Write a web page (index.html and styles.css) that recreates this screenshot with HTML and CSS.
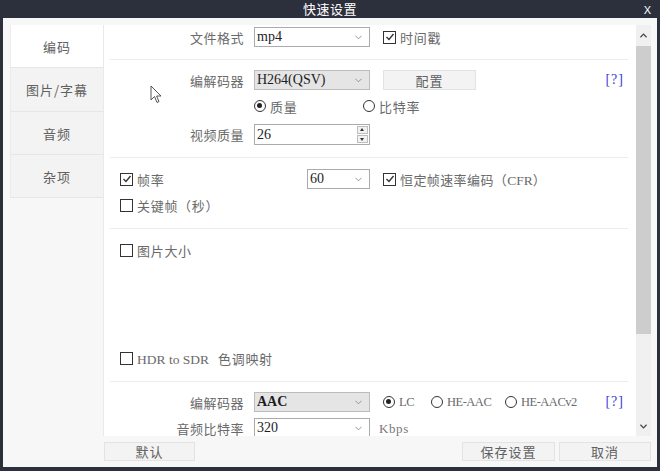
FILE: index.html
```html
<!DOCTYPE html>
<html lang="zh">
<head>
<meta charset="utf-8">
<title>快速设置</title>
<link rel="stylesheet" href="styles.css">
</head>
<body>
<div class="window">
  <div class="titlebar">
    <span class="title">快速设置</span>
    <span class="close">X</span>
  </div>
  <div class="body">
    <div class="main">
      <div class="tabs">
        <div class="tab active">编码</div>
        <div class="tab">图片/字幕</div>
        <div class="tab">音频</div>
        <div class="tab">杂项</div>
      </div>
      <div class="pane">
        <div class="content">
          <div class="section s1">
            <div class="row">
              <span class="lbl">文件格式</span>
              <div class="select field"><span class="val">mp4</span><svg class="chev" viewBox="0 0 8 5"><polyline points="0.5,0.5 4,4 7.5,0.5"/></svg></div>
              <label class="check after"><span class="box on"><svg viewBox="0 0 10 10"><polyline points="1.5,5 4,7.5 8.5,2"/></svg></span><span class="txt">时间戳</span></label>
            </div>
          </div>
          <div class="section s2">
            <div class="row">
              <span class="lbl">编解码器</span>
              <div class="select field dis"><span class="val">H264(QSV)</span><svg class="chev" viewBox="0 0 8 5"><polyline points="0.5,0.5 4,4 7.5,0.5"/></svg></div>
              <div class="btn cfg">配置</div>
              <span class="help">[?]</span>
            </div>
            <div class="row r3">
              <span class="lbl"></span>
              <label class="radio w109"><span class="dot on"></span><span class="txt">质量</span></label>
              <label class="radio"><span class="dot"></span><span class="txt">比特率</span></label>
            </div>
            <div class="row r4">
              <span class="lbl">视频质量</span>
              <div class="select field spin"><span class="val">26</span>
                <span class="arrows"><span class="ar up"></span><span class="ar dn"></span></span>
              </div>
            </div>
          </div>
          <div class="section s3">
            <div class="row">
              <label class="check w187"><span class="box on"><svg viewBox="0 0 10 10"><polyline points="1.5,5 4,7.5 8.5,2"/></svg></span><span class="txt">帧率</span></label>
              <div class="select fps"><span class="val">60</span><svg class="chev" viewBox="0 0 8 5"><polyline points="0.5,0.5 4,4 7.5,0.5"/></svg></div>
              <label class="check after"><span class="box on"><svg viewBox="0 0 10 10"><polyline points="1.5,5 4,7.5 8.5,2"/></svg></span><span class="txt tight">恒定帧速率编码（<span class="lat">CFR</span>）</span></label>
            </div>
            <div class="row r6">
              <label class="check"><span class="box"></span><span class="txt">关键帧（秒）</span></label>
            </div>
          </div>
          <div class="section s4">
            <div class="row r7">
              <label class="check"><span class="box"></span><span class="txt">图片大小</span></label>
            </div>
            <div class="row r8">
              <label class="check"><span class="box"></span><span class="txt"><span class="lat hdr">HDR to SDR</span>色调映射</span></label>
            </div>
          </div>
          <div class="section s5">
            <div class="row">
              <span class="lbl">编解码器</span>
              <div class="select field dis"><span class="val b">AAC</span><svg class="chev" viewBox="0 0 8 5"><polyline points="0.5,0.5 4,4 7.5,0.5"/></svg></div>
              <label class="radio after w48"><span class="dot on"></span><span class="txt rl">LC</span></label>
              <label class="radio w74"><span class="dot"></span><span class="txt rl">HE-AAC</span></label>
              <label class="radio"><span class="dot"></span><span class="txt rl">HE-AACv2</span></label>
              <span class="help">[?]</span>
            </div>
            <div class="row r10">
              <span class="lbl">音频比特率</span>
              <div class="select field"><span class="val">320</span><svg class="chev" viewBox="0 0 8 5"><polyline points="0.5,0.5 4,4 7.5,0.5"/></svg></div>
              <span class="unit">Kbps</span>
            </div>
          </div>
        </div>
        <div class="scrollbar">
          <div class="sbtn"><svg viewBox="0 0 8 5"><polyline points="0.5,4.5 4,1 7.5,4.5"/></svg></div>
          <div class="thumb"></div>
          <div class="track"></div>
          <div class="sbtn"><svg viewBox="0 0 8 5"><polyline points="0.5,0.5 4,4 7.5,0.5"/></svg></div>
        </div>
        <svg class="cursor" viewBox="0 0 12 19"><path d="M1,1 L1,15 L4.5,11.5 L7,17.5 L9,16.6 L6.6,11 L11,11 Z"/></svg>
      </div>
    </div>
    <div class="footer">
      <div class="btn fbtn def">默认</div>
      <div class="btn fbtn save">保存设置</div>
      <div class="btn fbtn cancel">取消</div>
    </div>
  </div>
</div>
</body>
</html>
```
FILE: styles.css
```css
* { box-sizing: border-box; }
html, body { margin: 0; padding: 0; }
body {
  width: 660px;
  height: 471px;
  overflow: hidden;
  font-family: "Noto Sans CJK SC", "Liberation Sans", sans-serif;
  font-size: 13px;
  color: #6a6a6a;
}
.window {
  width: 660px;
  height: 471px;
  display: flex;
  flex-direction: column;
  background: #2c2f3c;
  padding: 0 3px 4px 3px;
}
.titlebar {
  height: 18px;
  display: flex;
  align-items: center;
  justify-content: center;
  position: relative;
  color: #ffffff;
}
.title { font-size: 13px; letter-spacing: 0.5px; line-height: 18px; }
.close {
  position: absolute;
  right: 6px;
  top: 0;
  font-family: "Liberation Sans", sans-serif;
  font-size: 11px;
  line-height: 20px;
}
.body {
  flex: 1;
  background: #f7f7f7;
  padding: 7px 6px 6px 7px;
  display: flex;
  flex-direction: column;
}
.main {
  height: 411px;
  display: flex;
}
.tabs {
  width: 93px;
  display: flex;
  flex-direction: column;
}
.tab {
  height: 43px;
  display: flex;
  align-items: center;
  justify-content: center;
  background: #f3f3f3;
  border-bottom: 1px solid #e6e6e6;
  border-left: 1px solid #ececec;
  color: #606060;
  letter-spacing: 1px;
}
.tab:nth-child(2) { height: 44px; }
.tab.active { background: #ffffff; }
.pane {
  flex: 1;
  display: flex;
  background: #ffffff;
  border-left: 1px solid #e9e9e9;
  position: relative;
  overflow: hidden;
}
.content {
  flex: 1;
  overflow: hidden;
}
.section {
  margin: 0 8px 0 6px;
  padding-left: 10px;
  padding-right: 4px;
  border-bottom: 1px solid #ececec;
}
.s1 { padding-top: 2px; padding-bottom: 12px; }
.s2 { padding-top: 10px; padding-bottom: 12px; }
.s3 { padding-top: 11px; padding-bottom: 14px; }
.s4 { padding-top: 12px; padding-bottom: 14px; }
.s5 { padding-top: 10px; border-bottom: none; }
.row {
  display: flex;
  align-items: center;
  height: 20px;
}
.r3 { margin-top: 8px; height: 16px; }
.r4 { margin-top: 10px; height: 21px; }
.r4 .select { height: 21px; }
.r6 { margin-top: 7px; height: 18px; }
.r7 { height: 18px; }
.r8 { margin-top: 90px; height: 18px; }
.r10 { margin-top: 6px; }
.lbl {
  width: 124px;
  margin-right: 10px;
  text-align: right;
  letter-spacing: 0.5px;
  color: #6a6a6a;
  line-height: 15px;
  flex: none;
}
.select {
  height: 20px;
  border: 1px solid #ababab;
  background: #ffffff;
  display: flex;
  align-items: center;
  padding-left: 2px;
  position: relative;
  flex: none;
}
.field { width: 116px; }
.fps { width: 63px; }
.select.dis { background: #e5e5e5; border-color: #bcbcbc; }
.val {
  font-family: "Liberation Serif", serif;
  font-size: 14px;
  color: #1e1e1e;
  flex: 1;
}
.val.b { font-weight: bold; }
.chev {
  width: 7px;
  height: 5px;
  margin-right: 7px;
  fill: none;
  stroke: #888;
  stroke-width: 1;
}
.spin .arrows {
  display: flex;
  flex-direction: column;
  gap: 1px;
  margin-right: 1px;
}
.ar {
  width: 11px;
  height: 8px;
  border: 1px solid #bdbdbd;
  background: #f1f1f1;
  position: relative;
}
.ar::after {
  content: "";
  position: absolute;
  left: 2px;
  width: 0;
  height: 0;
  border-left: 2.5px solid transparent;
  border-right: 2.5px solid transparent;
}
.ar.up::after { top: 1px; border-bottom: 3px solid #333; }
.ar.dn::after { top: 2px; border-top: 3px solid #333; }
.after { margin-left: 13px; }
.check, .radio {
  display: flex;
  align-items: center;
  flex: none;
}
.box {
  width: 13px;
  height: 13px;
  border: 1.5px solid #333;
  background: #fff;
  margin-right: 4px;
  display: flex;
  align-items: center;
  justify-content: center;
}
.box svg {
  width: 10px;
  height: 10px;
  fill: none;
  stroke: #333;
  stroke-width: 1.4;
}
.txt { letter-spacing: 0.7px; color: #6a6a6a; }
.txt.tight { letter-spacing: 0.4px; }
.lat {
  font-family: "Liberation Serif", serif;
  font-size: 13.5px;
  letter-spacing: 0;
}
.lat.hdr { margin-right: 9px; }
.rl {
  font-family: "Liberation Serif", serif;
  font-size: 12.5px;
  letter-spacing: -0.5px;
}
.dot {
  width: 12px;
  height: 12px;
  border: 1.3px solid #333;
  border-radius: 50%;
  margin-right: 4px;
  position: relative;
  background: #fff;
}
.dot.on::after {
  content: "";
  position: absolute;
  left: 2px;
  top: 2px;
  width: 5.4px;
  height: 5.4px;
  border-radius: 50%;
  background: #222;
}
.w109 { width: 109px; }
.w187 { width: 187px; }
.w48 { width: 48px; }
.w74 { width: 74px; }
.btn {
  background: #f3f3f3;
  border: 1px solid #e3e3e3;
  color: #606060;
  display: flex;
  align-items: center;
  justify-content: center;
  letter-spacing: 1px;
}
.cfg {
  width: 93px;
  height: 20px;
  margin-left: 13px;
}
.help {
  margin-left: auto;
  font-family: "Liberation Serif", serif;
  font-size: 14px;
  color: #3b3bd6;
  letter-spacing: 1px;
}
.unit {
  margin-left: 9px;
  color: #777;
  font-family: "Liberation Serif", serif;
  font-size: 13px;
  letter-spacing: 0.6px;
  line-height: 15px;
}
.scrollbar {
  width: 15px;
  display: flex;
  flex-direction: column;
  background: #f0f0f0;
}
.sbtn {
  height: 20px;
  display: flex;
  align-items: center;
  justify-content: center;
}
.sbtn svg {
  width: 7px;
  height: 5px;
  fill: none;
  stroke: #444;
  stroke-width: 1.4;
}
.thumb {
  height: 288px;
  background: #cdcdcd;
  margin-top: 1px;
}
.track { flex: 1; }
.cursor {
  position: absolute;
  left: 46px;
  top: 60px;
  width: 12px;
  height: 19px;
  fill: #ffffff;
  stroke: #444;
  stroke-width: 0.9;
}
.footer {
  display: flex;
  margin-top: 6px;
  height: 19px;
}
.fbtn { height: 19px; }
.def { width: 91px; margin-left: 94px; }
.save { width: 93px; margin-left: auto; }
.cancel { width: 92px; margin-left: 4px; }
```
